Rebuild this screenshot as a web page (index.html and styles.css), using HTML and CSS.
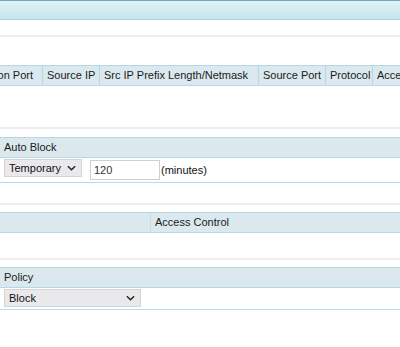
FILE: index.html
```html
<!DOCTYPE html>
<html>
<head>
<meta charset="utf-8">
<link rel="stylesheet" href="styles.css">
</head>
<body>
<div class="page">
  <div class="topbar"></div>
  <div class="spacer s14"></div>
  <div class="sep"></div>
  <div class="spacer s28"></div>

  <div class="thead">
    <div class="th c1">Destination Port</div>
    <div class="th c2">Source IP</div>
    <div class="th c3">Src IP Prefix Length/Netmask</div>
    <div class="th c4">Source Port</div>
    <div class="th c5">Protocol</div>
    <div class="th c6">Access Control</div>
  </div>

  <div class="spacer s41"></div>
  <div class="sep"></div>
  <div class="spacer s8"></div>

  <div class="hdr">Auto Block</div>
  <div class="row r-auto">
    <div class="select sel-temp"><span>Temporary</span><svg class="chev" viewBox="0 0 10 6" width="9" height="6"><path d="M1 1 L5 5 L9 1" fill="none" stroke="#222" stroke-width="1.6"/></svg></div>
    <div class="input">120</div>
    <span class="unit">(minutes)</span>
  </div>

  <div class="spacer s20"></div>
  <div class="sep"></div>
  <div class="spacer s7"></div>

  <div class="hdr split">
    <div class="hcell first"></div>
    <div class="hcell">Access Control</div>
  </div>

  <div class="spacer s25"></div>
  <div class="sep"></div>
  <div class="spacer s7"></div>

  <div class="hdr">Policy</div>
  <div class="row r-policy">
    <div class="select sel-policy"><span>Block</span><svg class="chev" viewBox="0 0 10 6" width="9" height="6"><path d="M1 1 L5 5 L9 1" fill="none" stroke="#222" stroke-width="1.6"/></svg></div>
  </div>
</div>
</body>
</html>
```

FILE: styles.css
```css
html, body {
  margin: 0;
  padding: 0;
  background: #ffffff;
}
body {
  font-family: "Liberation Sans", Arial, sans-serif;
  font-size: 11px;
  color: #1a1a1a;
  overflow: hidden;
}
.page {
  width: 400px;
  overflow: hidden;
}
.topbar {
  height: 18px;
  border-top: 1px solid #6ea7c2;
  border-bottom: 1px solid #a9d3e2;
  background: linear-gradient(#e0f1f6, #c7e5ee);
}
.spacer { height: 0; }
.s14 { height: 15px; }
.s28 { height: 28px; }
.s41 { height: 41px; }
.s8 { height: 8px; }
.s20 { height: 20px; }
.s7 { height: 7px; }
.s25 { height: 25px; }
.sep {
  height: 2px;
  background: #eeeeee;
}
.thead {
  display: flex;
  white-space: nowrap;
  height: 19px;
  background: #dbe9ef;
  border-top: 1px solid #b4d8e7;
  border-bottom: 1px solid #b4d8e7;
}
.th {
  flex: none;
  box-sizing: border-box;
  line-height: 19px;
  padding: 0 4px;
  border-right: 1px solid #b4d8e7;
  overflow: hidden;
}
.c1 {
  width: 143px;
  margin-left: -100px;
  text-align: right;
  padding-right: 9px;
}
.c2 { width: 57px; }
.c3 { width: 159px; }
.c4 { width: 67px; }
.c5 { width: 47px; }
.c6 { width: 120px; border-right: none; }
.hdr {
  height: 19px;
  line-height: 19px;
  background: #dbe9ef;
  border-top: 1px solid #b4d8e7;
  border-bottom: 1px solid #b4d8e7;
  padding-left: 4px;
}
.hdr.split {
  display: flex;
  padding-left: 0;
}
.hcell {
  padding-left: 4px;
}
.hcell.first {
  width: 146px;
  border-right: 1px solid #c2dfea;
}
.row {
  display: flex;
  align-items: center;
  padding-left: 4px;
  border-bottom: 1px solid #b4dde9;
}
.r-auto { height: 24px; }
.r-policy { height: 21px; }
.select {
  box-sizing: border-box;
  display: flex;
  align-items: center;
  justify-content: space-between;
  height: 18px;
  padding: 0 5px 0 4px;
  background: #e9e9ec;
  border: 1px solid #d4d4d4;
  color: #111111;
}
.sel-temp { width: 78px; margin-top: -4px; }
.sel-policy { width: 137px; margin-top: -1px; }
.chev { flex: none; }
.input {
  box-sizing: border-box;
  width: 70px;
  height: 20px;
  line-height: 18px;
  margin-left: 8px;
  padding-left: 3px;
  border: 1px solid #d0d0d0;
  color: #333333;
  background: #ffffff;
}
.unit {
  margin-left: 1px;
  color: #111111;
}
```
